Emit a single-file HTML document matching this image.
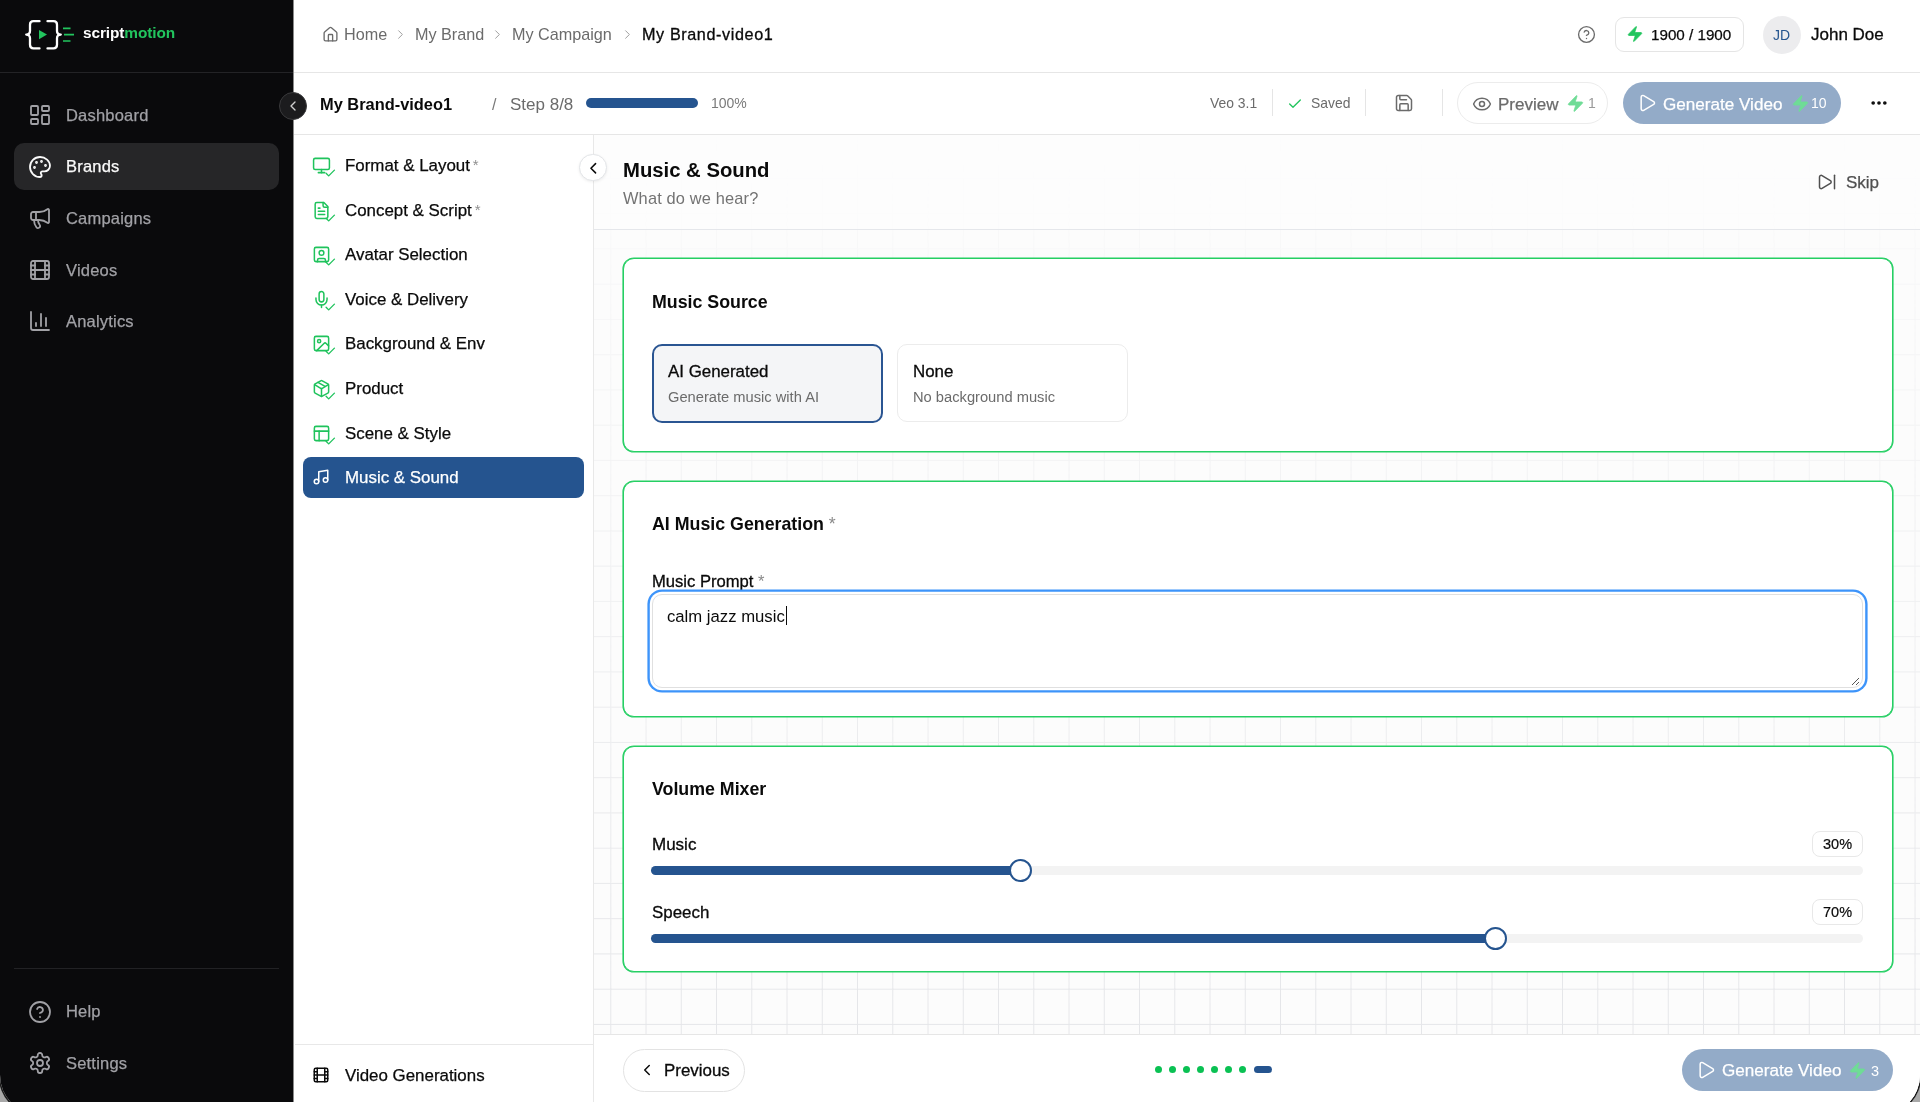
<!DOCTYPE html>
<html><head><meta charset="utf-8">
<style>
*{box-sizing:border-box;margin:0;padding:0}
html,body{width:1920px;height:1102px;overflow:hidden;background:#a8a8a8}
body{font-family:"Liberation Sans",sans-serif;color:#0a0a0a;position:relative}
.t{position:absolute;line-height:normal;white-space:nowrap;will-change:transform}
.ic{position:absolute;fill:none;stroke:currentColor;stroke-linecap:round;stroke-linejoin:round}
#app{position:absolute;left:0;top:0;width:1920px;height:1115px;background:#fff;border-radius:0 0 40px 40px;overflow:hidden;box-shadow:0 0 0 1.5px #1c1c1c}
#side{position:absolute;left:0;top:0;width:293px;height:1115px;background:#0a0a0c}
#topbar{position:absolute;left:293px;top:0;right:0;height:73px;background:#fff;border-bottom:1px solid #e6e6e6}
#subbar{position:absolute;left:293px;top:73px;right:0;height:62px;background:#fff;border-bottom:1px solid #e6e6e6}
#steps{position:absolute;left:293px;top:135px;width:301px;bottom:0;background:#fff;border-right:1px solid #e8e8e8}
#content{position:absolute;left:594px;top:135px;right:0;bottom:0;background-color:#fcfcfc}
#grid{position:absolute;left:0;top:0;right:0;bottom:0;
 background-image:linear-gradient(to right,#e5e6e9 1px,transparent 1px),linear-gradient(to bottom,#e5e6e9 1px,transparent 1px);
 background-size:35.25px 35.25px;background-position:16.3px 7.7px;
 -webkit-mask-image:linear-gradient(to bottom,rgba(0,0,0,.04) 0px,rgba(0,0,0,1) 870px);mask-image:linear-gradient(to bottom,rgba(0,0,0,.04) 0px,rgba(0,0,0,1) 870px)}
.card{position:absolute;background:#fff;border:1px solid #25cf63;border-radius:11px;box-shadow:0 0 0 0.6px #25cf63}
</style></head><body>
<div id="app">
<div id="side">
<div style="position:absolute;left:0;top:72px;width:293px;height:1px;background:#232326"></div>
<svg style="position:absolute;left:24px;top:18px" width="54" height="34" viewBox="0 0 54 34">
<path d="M15.5 3.2H9.5Q6 3.2 6 6.7V13Q6 16.6 2.2 16.6Q6 16.6 6 20.2V26.8Q6 30.4 9.5 30.4H15.5" fill="none" stroke="#fff" stroke-width="2.3" stroke-linecap="round" stroke-linejoin="round"/>
<path d="M23.5 3.2H29.5Q33 3.2 33 6.7V13Q33 16.6 36.8 16.6Q33 16.6 33 20.2V26.8Q33 30.4 29.5 30.4H23.5" fill="none" stroke="#fff" stroke-width="2.3" stroke-linecap="round" stroke-linejoin="round"/>
<path d="M15 12 L23 16.6 L15 21.2Z" fill="#22c55e"/>
<path d="M39 10.3H46.5M40 16.6H50M39 23H46.5" stroke="#22c55e" stroke-width="1.7"/>
</svg>
<div class="t" style="left:82.5px;top:24px;font-size:15.4px;color:#fff;font-weight:700;letter-spacing:-0.1px;">script<span style="color:#22c55e">motion</span></div>
<div style="position:absolute;left:14px;top:143px;width:264.5px;height:47px;background:#262628;border-radius:10px"></div>
<svg class="ic" style="left:28px;top:103px;color:#a1a1a6;" width="24" height="24" viewBox="0 0 24 24" stroke-width="1.8"><rect width="7" height="9" x="3" y="3" rx="1"/><rect width="7" height="5" x="14" y="3" rx="1"/><rect width="7" height="9" x="14" y="12" rx="1"/><rect width="7" height="5" x="3" y="16" rx="1"/></svg>
<div class="t" style="left:65.7px;top:106px;font-size:16.5px;color:#a1a1a6;font-weight:400;letter-spacing:0.2px;-webkit-text-stroke:0.25px #a1a1a6;">Dashboard</div>
<svg class="ic" style="left:28px;top:154.5px;color:#fafafa;" width="24" height="24" viewBox="0 0 24 24" stroke-width="1.8"><circle cx="13.5" cy="6.5" r=".5" fill="currentColor"/><circle cx="17.5" cy="10.5" r=".5" fill="currentColor"/><circle cx="8.5" cy="7.5" r=".5" fill="currentColor"/><circle cx="6.5" cy="12.5" r=".5" fill="currentColor"/><path d="M12 2C6.5 2 2 6.5 2 12s4.5 10 10 10c.926 0 1.648-.746 1.648-1.688 0-.437-.18-.835-.437-1.125-.29-.289-.438-.652-.438-1.125a1.64 1.64 0 0 1 1.668-1.668h1.996c3.051 0 5.555-2.503 5.555-5.554C21.965 6.012 17.461 2 12 2z"/></svg>
<div class="t" style="left:65.7px;top:157px;font-size:16.5px;color:#fafafa;font-weight:400;letter-spacing:0.2px;-webkit-text-stroke:0.25px #fafafa;">Brands</div>
<svg class="ic" style="left:28px;top:206px;color:#a1a1a6;" width="24" height="24" viewBox="0 0 24 24" stroke-width="1.8"><path d="M11 6a13 13 0 0 0 8.4-2.8A1 1 0 0 1 21 4v12a1 1 0 0 1-1.6.8A13 13 0 0 0 11 14H5a2 2 0 0 1-2-2V8a2 2 0 0 1 2-2z"/><path d="M6 14a12 12 0 0 0 2.4 7.2 2 2 0 0 0 3.2-2.4A8 8 0 0 1 10 14"/><path d="M8 6v8"/></svg>
<div class="t" style="left:65.7px;top:209px;font-size:16.5px;color:#a1a1a6;font-weight:400;letter-spacing:0.2px;-webkit-text-stroke:0.25px #a1a1a6;">Campaigns</div>
<svg class="ic" style="left:28px;top:257.5px;color:#a1a1a6;" width="24" height="24" viewBox="0 0 24 24" stroke-width="1.8"><rect width="18" height="18" x="3" y="3" rx="2"/><path d="M7 3v18"/><path d="M3 7.5h4"/><path d="M3 12h18"/><path d="M3 16.5h4"/><path d="M17 3v18"/><path d="M17 7.5h4"/><path d="M17 16.5h4"/></svg>
<div class="t" style="left:65.7px;top:261px;font-size:16.5px;color:#a1a1a6;font-weight:400;letter-spacing:0.2px;-webkit-text-stroke:0.25px #a1a1a6;">Videos</div>
<svg class="ic" style="left:28px;top:309px;color:#a1a1a6;" width="24" height="24" viewBox="0 0 24 24" stroke-width="1.8"><path d="M3 3v16a2 2 0 0 0 2 2h16"/><path d="M18 17V9"/><path d="M13 17V5"/><path d="M8 17v-3"/></svg>
<div class="t" style="left:65.7px;top:312px;font-size:16.5px;color:#a1a1a6;font-weight:400;letter-spacing:0.2px;-webkit-text-stroke:0.25px #a1a1a6;">Analytics</div>
<div style="position:absolute;left:14px;top:968px;width:264.5px;height:1px;background:#222225"></div>
<svg class="ic" style="left:28px;top:999.5px;color:#a1a1a6;" width="24" height="24" viewBox="0 0 24 24" stroke-width="1.8"><circle cx="12" cy="12" r="10"/><path d="M9.09 9a3 3 0 0 1 5.83 1c0 2-3 3-3 3"/><path d="M12 17h.01"/></svg>
<div class="t" style="left:65.7px;top:1002px;font-size:16.5px;color:#a1a1a6;font-weight:400;letter-spacing:0.2px;-webkit-text-stroke:0.25px #a1a1a6;">Help</div>
<svg class="ic" style="left:28px;top:1050.9px;color:#a1a1a6;" width="24" height="24" viewBox="0 0 24 24" stroke-width="1.8"><path d="M12.22 2h-.44a2 2 0 0 0-2 2v.18a2 2 0 0 1-1 1.73l-.43.25a2 2 0 0 1-2 0l-.15-.08a2 2 0 0 0-2.73.73l-.22.38a2 2 0 0 0 .73 2.73l.15.1a2 2 0 0 1 1 1.72v.51a2 2 0 0 1-1 1.74l-.15.09a2 2 0 0 0-.73 2.73l.22.38a2 2 0 0 0 2.73.73l.15-.08a2 2 0 0 1 2 0l.43.25a2 2 0 0 1 1 1.73V20a2 2 0 0 0 2 2h.44a2 2 0 0 0 2-2v-.18a2 2 0 0 1 1-1.73l.43-.25a2 2 0 0 1 2 0l.15.08a2 2 0 0 0 2.73-.73l.22-.39a2 2 0 0 0-.73-2.73l-.15-.08a2 2 0 0 1-1-1.74v-.5a2 2 0 0 1 1-1.74l.15-.09a2 2 0 0 0 .73-2.73l-.22-.38a2 2 0 0 0-2.73-.73l-.15.08a2 2 0 0 1-2 0l-.43-.25a2 2 0 0 1-1-1.73V4a2 2 0 0 0-2-2z"/><circle cx="12" cy="12" r="3"/></svg>
<div class="t" style="left:65.7px;top:1054px;font-size:16.5px;color:#a1a1a6;font-weight:400;letter-spacing:0.2px;-webkit-text-stroke:0.25px #a1a1a6;">Settings</div>
</div>
<div id="topbar"></div>
<svg class="ic" style="left:321.5px;top:26px;color:#6b6b6b;" width="17" height="17" viewBox="0 0 24 24" stroke-width="1.9"><path d="M15 21v-8a1 1 0 0 0-1-1h-4a1 1 0 0 0-1 1v8"/><path d="M3 10a2 2 0 0 1 .709-1.528l7-5.999a2 2 0 0 1 2.582 0l7 5.999A2 2 0 0 1 21 10v9a2 2 0 0 1-2 2H5a2 2 0 0 1-2-2z"/></svg>
<div class="t" style="left:343.9px;top:25px;font-size:16.2px;color:#6b6b6b;font-weight:400;letter-spacing:0px;">Home</div>
<svg class="ic" style="left:393px;top:27px;color:#a0a0a0;" width="15" height="15" viewBox="0 0 24 24" stroke-width="1.6"><path d="m9 18 6-6-6-6"/></svg>
<svg class="ic" style="left:490px;top:27px;color:#a0a0a0;" width="15" height="15" viewBox="0 0 24 24" stroke-width="1.6"><path d="m9 18 6-6-6-6"/></svg>
<div class="t" style="left:414.5px;top:25px;font-size:16.2px;color:#6b6b6b;font-weight:400;letter-spacing:0px;">My Brand</div>
<svg class="ic" style="left:620px;top:27px;color:#a0a0a0;" width="15" height="15" viewBox="0 0 24 24" stroke-width="1.6"><path d="m9 18 6-6-6-6"/></svg>
<div class="t" style="left:512px;top:25px;font-size:16.2px;color:#6b6b6b;font-weight:400;letter-spacing:0px;">My Campaign</div>
<div class="t" style="left:642px;top:25px;font-size:16.2px;color:#0a0a0a;font-weight:400;letter-spacing:0.6px;-webkit-text-stroke:0.3px #0a0a0a;">My Brand-video1</div>
<svg class="ic" style="left:1577px;top:25px;color:#6b6b6b;" width="19" height="19" viewBox="0 0 24 24" stroke-width="1.7"><circle cx="12" cy="12" r="10"/><path d="M9.09 9a3 3 0 0 1 5.83 1c0 2-3 3-3 3"/><path d="M12 17h.01"/></svg>
<div style="position:absolute;left:1615px;top:17px;width:129px;height:35px;border:1px solid #e5e5e5;border-radius:9px;background:#fff"></div>
<svg style="position:absolute;left:1626px;top:25px" width="18" height="18" viewBox="0 0 24 24"><path fill="#22c55e" stroke="#22c55e" stroke-width="1" d="M4 14a1 1 0 0 1-.78-1.63l9.9-10.2a.5.5 0 0 1 .86.46l-1.92 6.02A1 1 0 0 0 13 10h7a1 1 0 0 1 .78 1.63l-9.9 10.2a.5.5 0 0 1-.86-.46l1.92-6.02A1 1 0 0 0 11 14z"/></svg>
<div class="t" style="left:1651px;top:26px;font-size:15.2px;color:#0a0a0a;font-weight:400;letter-spacing:0px;-webkit-text-stroke:0.25px #0a0a0a;">1900 / 1900</div>
<div style="position:absolute;left:1762.5px;top:15.5px;width:38.5px;height:38.5px;border-radius:50%;background:#ececee"></div>
<div class="t" style="left:1773px;top:27px;font-size:14px;color:#26568f;font-weight:400;letter-spacing:0px;">JD</div>
<div class="t" style="left:1810.7px;top:25px;font-size:17px;color:#0a0a0a;font-weight:400;letter-spacing:0px;-webkit-text-stroke:0.3px #0a0a0a;">John Doe</div>
<div id="subbar"></div>
<div class="t" style="left:320px;top:95px;font-size:16.4px;color:#0a0a0a;font-weight:700;letter-spacing:0px;">My Brand-video1</div>
<div class="t" style="left:492px;top:96px;font-size:16px;color:#7a7a7a;font-weight:400;letter-spacing:0px;">/</div>
<div class="t" style="left:509.8px;top:95px;font-size:17px;color:#6b6b6b;font-weight:400;letter-spacing:0px;">Step 8/8</div>
<div style="position:absolute;left:586px;top:98px;width:112px;height:10px;border-radius:5px;background:#25548f"></div>
<div class="t" style="left:711px;top:95px;font-size:14px;color:#7a7a7a;font-weight:400;letter-spacing:0px;">100%</div>
<div class="t" style="left:1210px;top:95px;font-size:13.9px;color:#6b6b6b;font-weight:400;letter-spacing:0px;">Veo 3.1</div>
<div style="position:absolute;left:1272px;top:89px;width:1px;height:27px;background:#e5e5e5"></div>
<svg class="ic" style="left:1287px;top:96px;color:#22c55e;" width="16" height="16" viewBox="0 0 24 24" stroke-width="2"><path d="M20 6 9 17l-5-5"/></svg>
<div class="t" style="left:1311px;top:95px;font-size:13.9px;color:#6b6b6b;font-weight:400;letter-spacing:0px;">Saved</div>
<div style="position:absolute;left:1365px;top:89px;width:1px;height:27px;background:#e5e5e5"></div>
<svg class="ic" style="left:1394px;top:93px;color:#6b6b6b;" width="20" height="20" viewBox="0 0 24 24" stroke-width="1.8"><path d="M15.2 3a2 2 0 0 1 1.4.6l3.8 3.8a2 2 0 0 1 .6 1.4V19a2 2 0 0 1-2 2H5a2 2 0 0 1-2-2V5a2 2 0 0 1 2-2z"/><path d="M17 21v-7a1 1 0 0 0-1-1H8a1 1 0 0 0-1 1v7"/><path d="M7 3v4a1 1 0 0 0 1 1h7"/></svg>
<div style="position:absolute;left:1442px;top:89px;width:1px;height:27px;background:#e5e5e5"></div>
<div style="position:absolute;left:1457px;top:82px;width:151px;height:42px;border:1px solid #ececec;border-radius:21px;background:#fff"></div>
<svg class="ic" style="left:1471.5px;top:93.5px;color:#6b6b6b;" width="20" height="20" viewBox="0 0 24 24" stroke-width="1.8"><path d="M2.062 12.348a1 1 0 0 1 0-.696 10.75 10.75 0 0 1 19.876 0 1 1 0 0 1 0 .696 10.75 10.75 0 0 1-19.876 0"/><circle cx="12" cy="12" r="3"/></svg>
<div class="t" style="left:1498px;top:95px;font-size:17px;color:#6b6b6b;font-weight:400;letter-spacing:0px;-webkit-text-stroke:0.25px #6b6b6b;">Preview</div>
<svg style="position:absolute;left:1565.5px;top:94px" width="19" height="19" viewBox="0 0 24 24"><path fill="#6fdc96" stroke="#6fdc96" stroke-width="1" d="M4 14a1 1 0 0 1-.78-1.63l9.9-10.2a.5.5 0 0 1 .86.46l-1.92 6.02A1 1 0 0 0 13 10h7a1 1 0 0 1 .78 1.63l-9.9 10.2a.5.5 0 0 1-.86-.46l1.92-6.02A1 1 0 0 0 11 14z"/></svg>
<div class="t" style="left:1587.5px;top:95px;font-size:14px;color:#9a9a9a;font-weight:400;letter-spacing:0px;">1</div>
<div style="position:absolute;left:1623px;top:82px;width:218px;height:42px;border-radius:21px;background:#93abc8"></div>
<svg class="ic" style="left:1636.5px;top:93px;color:#fff;" width="20" height="20" viewBox="0 0 24 24" stroke-width="1.8"><path d="M5 5a2 2 0 0 1 3.008-1.728l11.997 6.998a2 2 0 0 1 .003 3.458l-12 7A2 2 0 0 1 5 19z"/></svg>
<div class="t" style="left:1663px;top:95px;font-size:17.1px;color:#fff;font-weight:400;letter-spacing:0px;-webkit-text-stroke:0.25px #fff;">Generate Video</div>
<svg style="position:absolute;left:1790.5px;top:94px" width="19" height="19" viewBox="0 0 24 24"><path fill="#6fdc96" stroke="#6fdc96" stroke-width="1" d="M4 14a1 1 0 0 1-.78-1.63l9.9-10.2a.5.5 0 0 1 .86.46l-1.92 6.02A1 1 0 0 0 13 10h7a1 1 0 0 1 .78 1.63l-9.9 10.2a.5.5 0 0 1-.86-.46l1.92-6.02A1 1 0 0 0 11 14z"/></svg>
<div class="t" style="left:1811px;top:95px;font-size:14px;color:#fff;font-weight:400;letter-spacing:0px;">10</div>
<svg class="ic" style="left:1868.5px;top:93px;color:#0a0a0a;" width="20" height="20" viewBox="0 0 24 24" stroke-width="2.4"><circle cx="12" cy="12" r="1"/><circle cx="19" cy="12" r="1"/><circle cx="5" cy="12" r="1"/></svg>
<div id="steps"></div>
<svg class="ic" style="left:311.5px;top:155.9px;color:#1fc35c;" width="19" height="19" viewBox="0 0 24 24" stroke-width="1.9"><rect width="20" height="14" x="2" y="3" rx="2"/><line x1="8" x2="16" y1="21" y2="21"/><line x1="12" x2="12" y1="17" y2="21"/></svg>
<svg class="ic" style="left:323.5px;top:166.9px;color:#1fc35c;" width="12.5" height="12.5" viewBox="0 0 24 24" stroke-width="2.6"><path d="M20 6 9 17l-5-5"/></svg>
<div class="t" style="left:345px;top:156px;font-size:16.9px;color:#0a0a0a;font-weight:400;letter-spacing:0px;-webkit-text-stroke:0.25px #0a0a0a;">Format &amp; Layout<span style="color:#8f8f8f;font-size:15px;position:relative;top:-1px;margin-left:3px;-webkit-text-stroke:0">*</span></div>
<svg class="ic" style="left:311.5px;top:200.5px;color:#1fc35c;" width="19" height="19" viewBox="0 0 24 24" stroke-width="1.9"><path d="M15 2H6a2 2 0 0 0-2 2v16a2 2 0 0 0 2 2h12a2 2 0 0 0 2-2V7Z"/><path d="M14 2v4a2 2 0 0 0 2 2h4"/><path d="M10 9H8"/><path d="M16 13H8"/><path d="M16 17H8"/></svg>
<svg class="ic" style="left:323.5px;top:211.5px;color:#1fc35c;" width="12.5" height="12.5" viewBox="0 0 24 24" stroke-width="2.6"><path d="M20 6 9 17l-5-5"/></svg>
<div class="t" style="left:345px;top:201px;font-size:16.9px;color:#0a0a0a;font-weight:400;letter-spacing:0px;-webkit-text-stroke:0.25px #0a0a0a;">Concept &amp; Script<span style="color:#8f8f8f;font-size:15px;position:relative;top:-1px;margin-left:3px;-webkit-text-stroke:0">*</span></div>
<svg class="ic" style="left:311.5px;top:245.1px;color:#1fc35c;" width="19" height="19" viewBox="0 0 24 24" stroke-width="1.9"><rect width="18" height="18" x="3" y="3" rx="2"/><circle cx="12" cy="10" r="3"/><path d="M7 21v-2a2 2 0 0 1 2-2h6a2 2 0 0 1 2 2v2"/></svg>
<svg class="ic" style="left:323.5px;top:256.1px;color:#1fc35c;" width="12.5" height="12.5" viewBox="0 0 24 24" stroke-width="2.6"><path d="M20 6 9 17l-5-5"/></svg>
<div class="t" style="left:345px;top:245px;font-size:16.9px;color:#0a0a0a;font-weight:400;letter-spacing:0px;-webkit-text-stroke:0.25px #0a0a0a;">Avatar Selection</div>
<svg class="ic" style="left:311.5px;top:289.7px;color:#1fc35c;" width="19" height="19" viewBox="0 0 24 24" stroke-width="1.9"><path d="M12 2a3 3 0 0 0-3 3v7a3 3 0 0 0 6 0V5a3 3 0 0 0-3-3Z"/><path d="M19 10v2a7 7 0 0 1-14 0v-2"/><line x1="12" x2="12" y1="19" y2="22"/></svg>
<svg class="ic" style="left:323.5px;top:300.7px;color:#1fc35c;" width="12.5" height="12.5" viewBox="0 0 24 24" stroke-width="2.6"><path d="M20 6 9 17l-5-5"/></svg>
<div class="t" style="left:345px;top:290px;font-size:16.9px;color:#0a0a0a;font-weight:400;letter-spacing:0px;-webkit-text-stroke:0.25px #0a0a0a;">Voice &amp; Delivery</div>
<svg class="ic" style="left:311.5px;top:334.29999999999995px;color:#1fc35c;" width="19" height="19" viewBox="0 0 24 24" stroke-width="1.9"><rect width="18" height="18" x="3" y="3" rx="2" ry="2"/><circle cx="9" cy="9" r="2"/><path d="m21 15-3.086-3.086a2 2 0 0 0-2.828 0L6 21"/></svg>
<svg class="ic" style="left:323.5px;top:345.29999999999995px;color:#1fc35c;" width="12.5" height="12.5" viewBox="0 0 24 24" stroke-width="2.6"><path d="M20 6 9 17l-5-5"/></svg>
<div class="t" style="left:345px;top:334px;font-size:16.9px;color:#0a0a0a;font-weight:400;letter-spacing:0px;-webkit-text-stroke:0.25px #0a0a0a;">Background &amp; Env</div>
<svg class="ic" style="left:311.5px;top:378.9px;color:#1fc35c;" width="19" height="19" viewBox="0 0 24 24" stroke-width="1.9"><path d="M11 21.73a2 2 0 0 0 2 0l7-4A2 2 0 0 0 21 16V8a2 2 0 0 0-1-1.73l-7-4a2 2 0 0 0-2 0l-7 4A2 2 0 0 0 3 8v8a2 2 0 0 0 1 1.73z"/><path d="M12 22V12"/><path d="m3.3 7 7.703 4.734a2 2 0 0 0 1.994 0L20.7 7"/><path d="m7.5 4.27 9 5.15"/></svg>
<svg class="ic" style="left:323.5px;top:389.9px;color:#1fc35c;" width="12.5" height="12.5" viewBox="0 0 24 24" stroke-width="2.6"><path d="M20 6 9 17l-5-5"/></svg>
<div class="t" style="left:345px;top:379px;font-size:16.9px;color:#0a0a0a;font-weight:400;letter-spacing:0px;-webkit-text-stroke:0.25px #0a0a0a;">Product</div>
<svg class="ic" style="left:311.5px;top:423.5px;color:#1fc35c;" width="19" height="19" viewBox="0 0 24 24" stroke-width="1.9"><rect width="18" height="18" x="3" y="3" rx="2"/><path d="M3 9h18"/><path d="M9 21V9"/></svg>
<svg class="ic" style="left:323.5px;top:434.5px;color:#1fc35c;" width="12.5" height="12.5" viewBox="0 0 24 24" stroke-width="2.6"><path d="M20 6 9 17l-5-5"/></svg>
<div class="t" style="left:345px;top:424px;font-size:16.9px;color:#0a0a0a;font-weight:400;letter-spacing:0px;-webkit-text-stroke:0.25px #0a0a0a;">Scene &amp; Style</div>
<div style="position:absolute;left:303px;top:457px;width:281px;height:41px;border-radius:8px;background:#25548f"></div>
<svg class="ic" style="left:312px;top:468px;color:#fff;" width="18" height="18" viewBox="0 0 24 24" stroke-width="2"><path d="M9 18V5l12-2v13"/><circle cx="6" cy="18" r="3"/><circle cx="18" cy="16" r="3"/></svg>
<div class="t" style="left:345px;top:468px;font-size:16.9px;color:#fff;font-weight:400;letter-spacing:0px;-webkit-text-stroke:0.25px #fff;">Music &amp; Sound</div>
<div style="position:absolute;left:295px;top:1044px;width:298px;height:1px;background:#e8e8e8"></div>
<svg class="ic" style="left:312px;top:1066px;color:#0a0a0a;" width="18" height="18" viewBox="0 0 24 24" stroke-width="2"><rect width="18" height="18" x="3" y="3" rx="2"/><path d="M7 3v18"/><path d="M3 7.5h4"/><path d="M3 12h18"/><path d="M3 16.5h4"/><path d="M17 3v18"/><path d="M17 7.5h4"/><path d="M17 16.5h4"/></svg>
<div class="t" style="left:345px;top:1066px;font-size:16.9px;color:#0a0a0a;font-weight:400;letter-spacing:0px;-webkit-text-stroke:0.25px #0a0a0a;">Video Generations</div>
<div id="content"><div id="grid"></div>
<div style="position:absolute;left:0;top:0;right:0;height:95px;background:rgba(255,255,255,.45);border-bottom:1px solid #e5e7eb"></div>
</div>
<div class="t" style="left:623px;top:159px;font-size:20.3px;color:#0a0a0a;font-weight:700;letter-spacing:0px;">Music &amp; Sound</div>
<div class="t" style="left:623px;top:189px;font-size:16.4px;color:#737373;font-weight:400;letter-spacing:0.15px;">What do we hear?</div>
<svg class="ic" style="left:1817px;top:172px;color:#505050" width="20" height="20" viewBox="0 0 24 24" stroke-width="1.8"><path d="M21 4v16"/><path d="M6.029 4.285A2 2 0 0 0 3 6v12a2 2 0 0 0 3.029 1.715l9.997-5.998a2 2 0 0 0 .003-3.432z"/></svg>
<div class="t" style="left:1845.8px;top:173px;font-size:17px;color:#505050;font-weight:400;letter-spacing:0px;-webkit-text-stroke:0.25px #505050;">Skip</div>
<div class="card" style="left:622.5px;top:258px;width:1270px;height:193.5px"></div>
<div class="t" style="left:651.7px;top:292px;font-size:17.8px;color:#0a0a0a;font-weight:700;letter-spacing:0px;">Music Source</div>
<div style="position:absolute;left:651.5px;top:343.5px;width:231px;height:79px;border:2.5px solid #2a5592;border-radius:10px;background:#f4f5f7"></div>
<div class="t" style="left:667.7px;top:362px;font-size:16.9px;color:#0a0a0a;font-weight:400;letter-spacing:0px;-webkit-text-stroke:0.3px #0a0a0a;">AI Generated</div>
<div class="t" style="left:667.8px;top:389px;font-size:14.7px;color:#6b6b6b;font-weight:400;letter-spacing:0px;">Generate music with AI</div>
<div style="position:absolute;left:897px;top:344px;width:231px;height:78px;border:1px solid #ececec;border-radius:10px;background:#fff"></div>
<div class="t" style="left:912.7px;top:362px;font-size:16.9px;color:#0a0a0a;font-weight:400;letter-spacing:0px;-webkit-text-stroke:0.3px #0a0a0a;">None</div>
<div class="t" style="left:912.7px;top:389px;font-size:14.7px;color:#6b6b6b;font-weight:400;letter-spacing:0px;">No background music</div>
<div class="card" style="left:622.5px;top:481px;width:1270px;height:235.5px"></div>
<div class="t" style="left:652.3px;top:514px;font-size:17.8px;color:#0a0a0a;font-weight:700;letter-spacing:0px;">AI Music Generation <span style="color:#8a8a8a;font-weight:400">*</span></div>
<div class="t" style="left:652.3px;top:572px;font-size:16.6px;color:#0a0a0a;font-weight:400;letter-spacing:0px;-webkit-text-stroke:0.3px #0a0a0a;">Music Prompt <span style="color:#8a8a8a;-webkit-text-stroke:0">*</span></div>
<div style="position:absolute;left:652px;top:594.3px;width:1211px;height:93.7px;border:1px solid #e0e0e0;border-radius:10px;background:#fff;box-shadow:0 0 0 2.2px #fff,0 0 0 4.6px #3d94fa"></div>
<div class="t" style="left:667px;top:607px;font-size:16.7px;color:#0a0a0a;font-weight:400;letter-spacing:0px;">calm jazz music</div>
<div style="position:absolute;left:786px;top:606px;width:1.3px;height:19px;background:#0a0a0a"></div>
<svg style="position:absolute;left:1851px;top:677px" width="9" height="9" viewBox="0 0 9 9"><path d="M8 1L1 8M8 5L5 8" stroke="#555" stroke-width="1"/></svg>
<div class="card" style="left:622.5px;top:745.5px;width:1270px;height:226.5px"></div>
<div class="t" style="left:652px;top:779px;font-size:17.8px;color:#0a0a0a;font-weight:700;letter-spacing:0px;">Volume Mixer</div>
<div class="t" style="left:652px;top:835px;font-size:17px;color:#0a0a0a;font-weight:400;letter-spacing:0px;-webkit-text-stroke:0.3px #0a0a0a;">Music</div>
<div style="position:absolute;left:1812px;top:831px;width:51px;height:26px;border:1px solid #e8e8e8;border-radius:8px"></div>
<div class="t" style="left:1822.7px;top:836px;font-size:14.5px;color:#0a0a0a;font-weight:400;letter-spacing:0px;-webkit-text-stroke:0.2px #0a0a0a;">30%</div>
<div style="position:absolute;left:651px;top:866px;width:1212px;height:9px;border-radius:5px;background:#f3f3f3"></div>
<div style="position:absolute;left:651px;top:866px;width:370px;height:9px;border-radius:5px;background:#25548f"></div>
<div style="position:absolute;left:1008.5px;top:859px;width:23px;height:23px;border-radius:50%;background:#fff;border:2px solid #25548f"></div>
<div class="t" style="left:652px;top:903px;font-size:16.9px;color:#0a0a0a;font-weight:400;letter-spacing:0px;-webkit-text-stroke:0.3px #0a0a0a;">Speech</div>
<div style="position:absolute;left:1812px;top:899px;width:51px;height:26px;border:1px solid #e8e8e8;border-radius:8px"></div>
<div class="t" style="left:1822.7px;top:904px;font-size:14.5px;color:#0a0a0a;font-weight:400;letter-spacing:0px;-webkit-text-stroke:0.2px #0a0a0a;">70%</div>
<div style="position:absolute;left:651px;top:934px;width:1212px;height:9px;border-radius:5px;background:#f3f3f3"></div>
<div style="position:absolute;left:651px;top:934px;width:845px;height:9px;border-radius:5px;background:#25548f"></div>
<div style="position:absolute;left:1483.5px;top:927px;width:23px;height:23px;border-radius:50%;background:#fff;border:2px solid #25548f"></div>
<div style="position:absolute;left:594px;top:1034px;right:0;bottom:0;background:#fff;border-top:1px solid #e6e6e6"></div>
<div style="position:absolute;left:622.5px;top:1049px;width:122px;height:42.5px;border:1px solid #e3e3e3;border-radius:22px;background:#fff"></div>
<svg class="ic" style="left:637.5px;top:1061px;color:#0a0a0a;" width="18" height="18" viewBox="0 0 24 24" stroke-width="2"><path d="m15 18-6-6 6-6"/></svg>
<div class="t" style="left:664px;top:1061px;font-size:16.9px;color:#0a0a0a;font-weight:400;letter-spacing:0px;-webkit-text-stroke:0.3px #0a0a0a;">Previous</div>
<div style="position:absolute;left:1155.20px;top:1066.2px;width:7px;height:7px;border-radius:50%;background:#0ac153"></div>
<div style="position:absolute;left:1169.24px;top:1066.2px;width:7px;height:7px;border-radius:50%;background:#0ac153"></div>
<div style="position:absolute;left:1183.28px;top:1066.2px;width:7px;height:7px;border-radius:50%;background:#0ac153"></div>
<div style="position:absolute;left:1197.32px;top:1066.2px;width:7px;height:7px;border-radius:50%;background:#0ac153"></div>
<div style="position:absolute;left:1211.36px;top:1066.2px;width:7px;height:7px;border-radius:50%;background:#0ac153"></div>
<div style="position:absolute;left:1225.40px;top:1066.2px;width:7px;height:7px;border-radius:50%;background:#0ac153"></div>
<div style="position:absolute;left:1239.44px;top:1066.2px;width:7px;height:7px;border-radius:50%;background:#0ac153"></div>
<div style="position:absolute;left:1253.6px;top:1066.2px;width:18.5px;height:7px;border-radius:4px;background:#25548f"></div>
<div style="position:absolute;left:1682px;top:1049px;width:211px;height:42px;border-radius:21px;background:#93abc8"></div>
<svg class="ic" style="left:1695.5px;top:1060px;color:#fff;" width="20" height="20" viewBox="0 0 24 24" stroke-width="1.8"><path d="M5 5a2 2 0 0 1 3.008-1.728l11.997 6.998a2 2 0 0 1 .003 3.458l-12 7A2 2 0 0 1 5 19z"/></svg>
<div class="t" style="left:1722px;top:1061px;font-size:17.1px;color:#fff;font-weight:400;letter-spacing:0px;-webkit-text-stroke:0.25px #fff;">Generate Video</div>
<svg style="position:absolute;left:1848px;top:1061px" width="19" height="19" viewBox="0 0 24 24"><path fill="#6fdc96" stroke="#6fdc96" stroke-width="1" d="M4 14a1 1 0 0 1-.78-1.63l9.9-10.2a.5.5 0 0 1 .86.46l-1.92 6.02A1 1 0 0 0 13 10h7a1 1 0 0 1 .78 1.63l-9.9 10.2a.5.5 0 0 1-.86-.46l1.92-6.02A1 1 0 0 0 11 14z"/></svg>
<div class="t" style="left:1870.6px;top:1063px;font-size:14.5px;color:#fff;font-weight:400;letter-spacing:0px;">3</div>
<div style="position:absolute;left:579.3px;top:153.5px;width:27.8px;height:27.8px;border-radius:50%;background:#fff;border:1px solid #e3e5e8;box-shadow:0 1px 3px rgba(0,0,0,.07)"></div>
<svg class="ic" style="left:583.8px;top:158.5px;color:#0a0a0a;" width="18.5" height="18.5" viewBox="0 0 24 24" stroke-width="2"><path d="m15 18-6-6 6-6"/></svg>
<div style="position:absolute;left:293px;top:0;width:1px;height:1102px;background:#8a8a8a"></div>
<div style="position:absolute;left:278.5px;top:91.5px;width:28px;height:28px;border-radius:50%;background:#1c1c1e;border:1px solid #3a3a3c"></div>
<svg class="ic" style="left:284.5px;top:97.5px;color:#d0d0d0;" width="16" height="16" viewBox="0 0 24 24" stroke-width="2"><path d="m15 18-6-6 6-6"/></svg>
</div>
</body></html>
